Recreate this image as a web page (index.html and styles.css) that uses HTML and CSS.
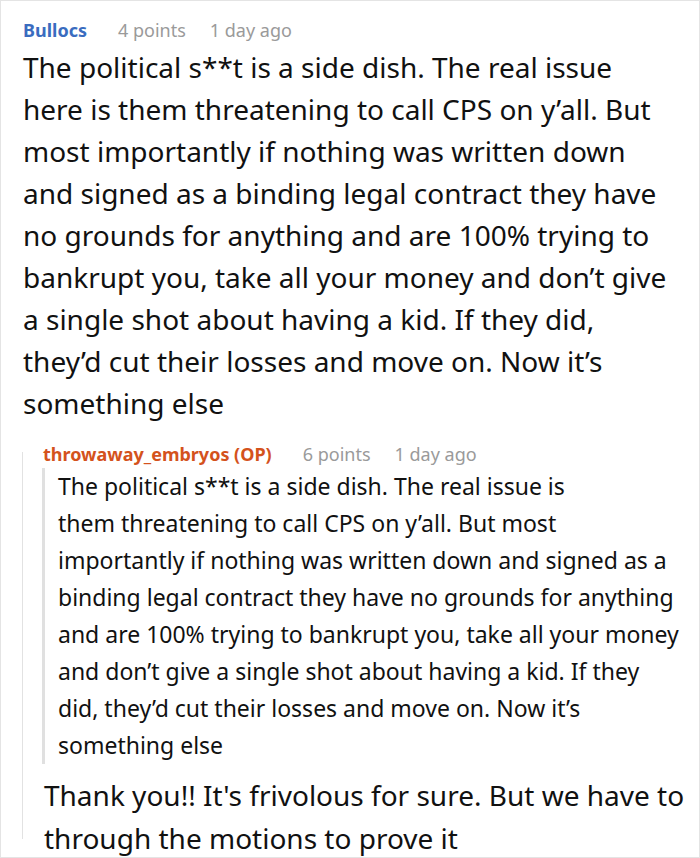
FILE: index.html
```html
<!DOCTYPE html>
<html lang="en">
<head>
  <meta charset="UTF-8" />
  <title>Comment thread</title>
  <link rel="stylesheet" href="styles.css">
</head>
<body>
  <div class="frame">
    <div class="comment">
      <div class="comment-meta">
        <span class="author">Bullocs</span>
        <span class="points">4 points</span>
        <span class="time">1 day ago</span>
      </div>
      <p class="comment-body">The political s**t is a side dish. The real issue<br>
        here is them threatening to call CPS on y’all. But<br>
        most importantly if nothing was written down<br>
        and signed as a binding legal contract they have<br>
        no grounds for anything and are 100% trying to<br>
        bankrupt you, take all your money and don’t give<br>
        a single shot about having a kid. If they did,<br>
        they’d cut their losses and move on. Now it’s<br>
        something else</p>

      <div class="reply">
        <div class="comment-meta">
          <span class="author op">throwaway_embryos (OP)</span>
          <span class="points">6 points</span>
          <span class="time">1 day ago</span>
        </div>
        <blockquote class="quote">
          <p class="quote-text">The political s**t is a side dish. The real issue is<br>
            them threatening to call CPS on y’all. But most<br>
            importantly if nothing was written down and signed as a<br>
            binding legal contract they have no grounds for anything<br>
            and are 100% trying to bankrupt you, take all your money<br>
            and don’t give a single shot about having a kid. If they<br>
            did, they’d cut their losses and move on. Now it’s<br>
            something else</p>
        </blockquote>
        <p class="reply-body">Thank you!! It's frivolous for sure. But we have to<br>
          through the motions to prove it</p>
      </div>
    </div>
  </div>
</body>
</html>
```

FILE: styles.css
```css
* {
  box-sizing: border-box;
  margin: 0;
  padding: 0;
}

html, body {
  background: #fff;
  font-family: "Noto Sans", "Open Sans", sans-serif;
  color: #111;
}

.frame {
  width: 700px;
  height: 858px;
  border: 1px solid #e4e4e4;
  overflow: hidden;
  padding: 17px 0 0 22px;
}

/* Header line of each comment */
.comment-meta {
  display: flex;
  align-items: baseline;
  font-size: 18px;
  line-height: 24px;
  white-space: nowrap;
}

.author {
  color: #3a6cbf;
  font-weight: bold;
  margin-right: 31px;
}

.author.op {
  color: #d4521c;
}

.points {
  color: #9a9a9a;
  margin-right: 24px;
}

.time {
  color: #9a9a9a;
}

.comment-body {
  margin-top: 4px;
  font-size: 28px;
  line-height: 42px;
  white-space: nowrap;
}

/* Nested reply */
.reply {
  position: relative;
  margin-top: 18px;
  margin-left: -1px;
  padding-left: 21px;
}

.reply::before {
  content: "";
  position: absolute;
  left: 0;
  top: 10px;
  bottom: 21px;
  width: 1px;
  background: #e2e2e2;
}

.quote {
  margin: 2px 0 0 -1px;
  border-left: 3px solid #e0e0e0;
  padding-left: 13px;
}

.quote-text {
  font-size: 23px;
  line-height: 37px;
  white-space: nowrap;
}

.reply-body {
  margin: 10px 0 0 1px;
  font-size: 28px;
  line-height: 43px;
  white-space: nowrap;
}
```
